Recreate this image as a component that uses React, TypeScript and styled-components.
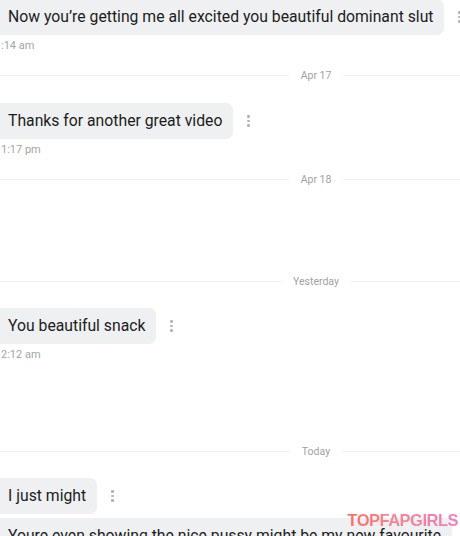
import React from "react";
import styled, { createGlobalStyle } from "styled-components";

type Item =
  | { kind: "day"; label: string; before?: number }
  | { kind: "msg"; text: string; time?: string; before?: number };

const items: Item[] = [
  { kind: "msg", text: "Now you’re getting me all excited you beautiful dominant slut", time: ":14 am" },
  { kind: "day", label: "Apr 17", before: 14 },
  { kind: "msg", text: "Thanks for another great video", time: "1:17 pm", before: 20 },
  { kind: "day", label: "Apr 18", before: 14 },
  { kind: "day", label: "Yesterday", before: 86 },
  { kind: "msg", text: "You beautiful snack", time: "2:12 am", before: 19 },
  { kind: "day", label: "Today", before: 81 },
  { kind: "msg", text: "I just might", before: 19 },
  { kind: "msg", text: "Youre even showing the nice pussy might be my new favourite", before: 4 },
];

const App: React.FC = () => {
  return (
    <Page>
      <GlobalStyle />
      <Feed>
        {items.map((item, i) =>
          item.kind === "day" ? (
            <DayDivider key={i} $before={item.before ?? 0}>
              <Line />
              <DayLabel>{item.label}</DayLabel>
              <Line />
            </DayDivider>
          ) : (
            <Message key={i} $before={item.before ?? 0}>
              <BubbleRow>
                <Bubble>{item.text}</Bubble>
                <MoreButton aria-label="More">
                  <span />
                  <span />
                  <span />
                </MoreButton>
              </BubbleRow>
              {item.time && <Time>{item.time}</Time>}
            </Message>
          )
        )}
      </Feed>
      <Watermark>TOPFAPGIRLS</Watermark>
    </Page>
  );
};

const GlobalStyle = createGlobalStyle`
  html, body {
    margin: 0;
    padding: 0;
    background: #ffffff;
    overflow: hidden;
  }
  body {
    font-family: Roboto, "Noto Sans", sans-serif;
  }
`;

const Page = styled.div`
  position: relative;
  width: 460px;
  height: 536px;
  overflow: hidden;
  background: #ffffff;
`;

const Feed = styled.div`
  display: flex;
  flex-direction: column;
  width: 632px;
  margin-top: -1px;
`;

const Message = styled.div<{ $before: number }>`
  display: flex;
  flex-direction: column;
  align-items: flex-start;
  margin-top: ${(p) => p.$before}px;
`;

const BubbleRow = styled.div`
  display: flex;
  align-items: center;
  gap: 12px;
`;

const Bubble = styled.div`
  background: #eff0f2;
  color: #1c1d20;
  font-size: 15.75px;
  line-height: 19px;
  padding: 8px 11px 9px 8px;
  border-radius: 0 7px 7px 0;
  white-space: nowrap;
`;

const MoreButton = styled.div`
  display: flex;
  flex-direction: column;
  gap: 2px;
  padding: 2px;

  span {
    width: 2.5px;
    height: 2.5px;
    border-radius: 50%;
    background: #b0b3b8;
  }
`;

const Time = styled.div`
  font-size: 11px;
  line-height: 14px;
  color: #a3a5a8;
  margin-top: 4px;
  padding-left: 1px;
`;

const DayDivider = styled.div<{ $before: number }>`
  display: grid;
  grid-template-columns: 1fr auto 1fr;
  align-items: center;
  margin-top: ${(p) => p.$before}px;
  height: 16px;
`;

const Line = styled.div`
  height: 1px;
  background: #eceef0;
`;

const DayLabel = styled.div`
  font-size: 10.5px;
  color: #9fa2a6;
  padding: 0 12px;
`;

const Watermark = styled.div`
  position: absolute;
  right: 2px;
  bottom: 6px;
  font-family: "Liberation Sans", Arial, sans-serif;
  font-weight: 700;
  font-size: 16.5px;
  letter-spacing: -0.5px;
  background: linear-gradient(90deg, #ff5d4f 0%, #f77a86 40%, #ec6fb8 100%);
  -webkit-background-clip: text;
  background-clip: text;
  color: transparent;
  opacity: 0.9;
`;

export default App;
